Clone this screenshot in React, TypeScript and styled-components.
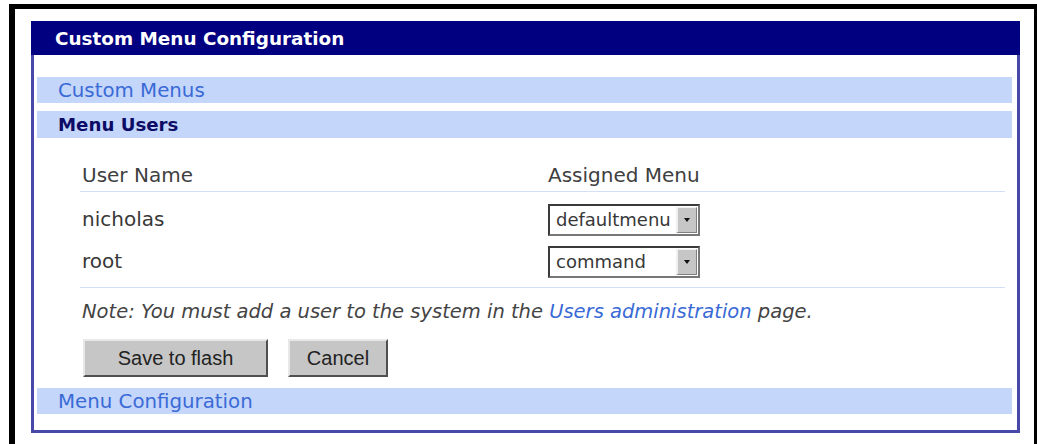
import React from "react";
import styled, { createGlobalStyle } from "styled-components";

const GlobalStyle = createGlobalStyle`
  html, body { margin: 0; padding: 0; background: #ffffff; }
  body {
    padding: 4px 0 0 9px;
    font-family: "DejaVu Sans", Verdana, sans-serif;
    overflow: hidden;
  }
`;

const Frame = styled.div`
  border-top: 5px solid #000;
  border-left: 6px solid #000;
  border-right: 3px solid #000;
  padding: 12px 14px 12px 16px;
  background: #fff;
`;

const Panel = styled.section`
  display: flex;
  flex-direction: column;
`;

const PanelTitle = styled.h1`
  margin: 0;
  height: 34px;
  background: #000080;
  color: #fff;
  font-size: 18.4px;
  font-weight: bold;
  display: flex;
  align-items: center;
  padding-left: 24px;
`;

const PanelBody = styled.div`
  border: 3px solid #4848a8;
  border-top: none;
  padding: 22px 5px 16px 3px;
  display: flex;
  flex-direction: column;
`;

const SectionBar = styled.div<{ $active?: boolean; $h?: number; $last?: boolean }>`
  height: ${(p) => p.$h ?? 26}px;
  background: #c4d6fa;
  display: flex;
  align-items: center;
  padding-left: 21px;
  font-size: ${(p) => (p.$active ? 18.2 : 19.8)}px;
  font-weight: ${(p) => (p.$active ? "bold" : "normal")};
  color: ${(p) => (p.$active ? "#0c0c66" : "#3a6ad6")};
  margin-bottom: ${(p) => (p.$last ? 0 : 8)}px;
`;

const Content = styled.div`
  margin: 12px 7px 0 43px;
  display: flex;
  flex-direction: column;
`;

const UserGrid = styled.div`
  display: grid;
  grid-template-columns: 466px 1fr;
`;

const HeadCell = styled.div`
  height: 33px;
  border-bottom: 1px solid #d4e0fa;
  display: flex;
  align-items: center;
  padding-left: 2px;
  font-size: 20px;
  color: #404040;
`;

const Cell = styled.div<{ $first?: boolean; $last?: boolean }>`
  height: 42px;
  display: flex;
  align-items: center;
  padding-left: 2px;
  margin-top: ${(p) => (p.$first ? 6 : 0)}px;
  margin-bottom: ${(p) => (p.$last ? 5 : 0)}px;
  font-size: 20px;
  color: #383838;
`;

const Divider = styled.div`
  grid-column: 1 / -1;
  border-bottom: 1px solid #d4e0fa;
`;

const SelectBox = styled.div`
  width: 152px;
  height: 32px;
  box-sizing: border-box;
  border: 2px solid #3a3a3a;
  border-right-color: #777;
  border-bottom-color: #777;
  display: flex;
  align-items: stretch;
  background: #fff;
  margin-top: 1px;
`;

const SelectValue = styled.span`
  flex: 1;
  display: flex;
  align-items: center;
  padding-left: 6px;
  font-size: 18px;
  color: #383838;
  overflow: hidden;
  white-space: nowrap;
`;

const ArrowButton = styled.span`
  width: 18px;
  margin: 1px;
  background: #c6c6c6;
  border-left: 2px solid #f0f0f0;
  border-top: 1px solid #f0f0f0;
  border-right: 1px solid #808080;
  border-bottom: 1px solid #808080;
  display: flex;
  align-items: center;
  justify-content: center;
  &::after {
    content: "";
    border-left: 3px solid transparent;
    border-right: 3px solid transparent;
    border-top: 4px solid #111;
  }
`;

const Note = styled.p`
  margin: 0;
  height: 46px;
  display: flex;
  align-items: center;
  padding-left: 2px;
  font-style: italic;
  font-size: 19.5px;
  color: #444;
  white-space: pre;
`;

const NoteLink = styled.a`
  color: #3a6ad6;
  text-decoration: none;
`;

const ButtonRow = styled.div`
  display: flex;
  gap: 20px;
  margin: 5px 0 11px 3px;
`;

const PushButton = styled.button<{ $w: number }>`
  width: ${(p) => p.$w}px;
  height: 38px;
  background: #c6c6c6;
  border: 2px solid;
  border-color: #e8e8e8 #505050 #505050 #e8e8e8;
  font-family: "Liberation Sans", Arial, sans-serif;
  font-size: 20px;
  color: #222;
  padding: 0;
`;

const users = [
  { name: "nicholas", menu: "defaultmenu" },
  { name: "root", menu: "command" },
];

export default function App() {
  return (
    <>
      <GlobalStyle />
      <Frame>
        <Panel>
          <PanelTitle>Custom Menu Configuration</PanelTitle>
          <PanelBody>
            <SectionBar>Custom Menus</SectionBar>
            <SectionBar $active $h={27}>Menu Users</SectionBar>
            <Content>
              <UserGrid>
                <HeadCell>User Name</HeadCell>
                <HeadCell>Assigned Menu</HeadCell>
                {users.map((u, i) => (
                  <React.Fragment key={u.name}>
                    <Cell $first={i === 0} $last={i === users.length - 1}>{u.name}</Cell>
                    <Cell $first={i === 0} $last={i === users.length - 1}>
                      <SelectBox>
                        <SelectValue>{u.menu}</SelectValue>
                        <ArrowButton />
                      </SelectBox>
                    </Cell>
                  </React.Fragment>
                ))}
                <Divider />
              </UserGrid>
              <Note>
                Note: You must add a user to the system in the{" "}
                <NoteLink href="#">Users administration</NoteLink> page.
              </Note>
              <ButtonRow>
                <PushButton $w={185}>Save to flash</PushButton>
                <PushButton $w={100}>Cancel</PushButton>
              </ButtonRow>
            </Content>
            <SectionBar $last>Menu Configuration</SectionBar>
          </PanelBody>
        </Panel>
      </Frame>
    </>
  );
}
